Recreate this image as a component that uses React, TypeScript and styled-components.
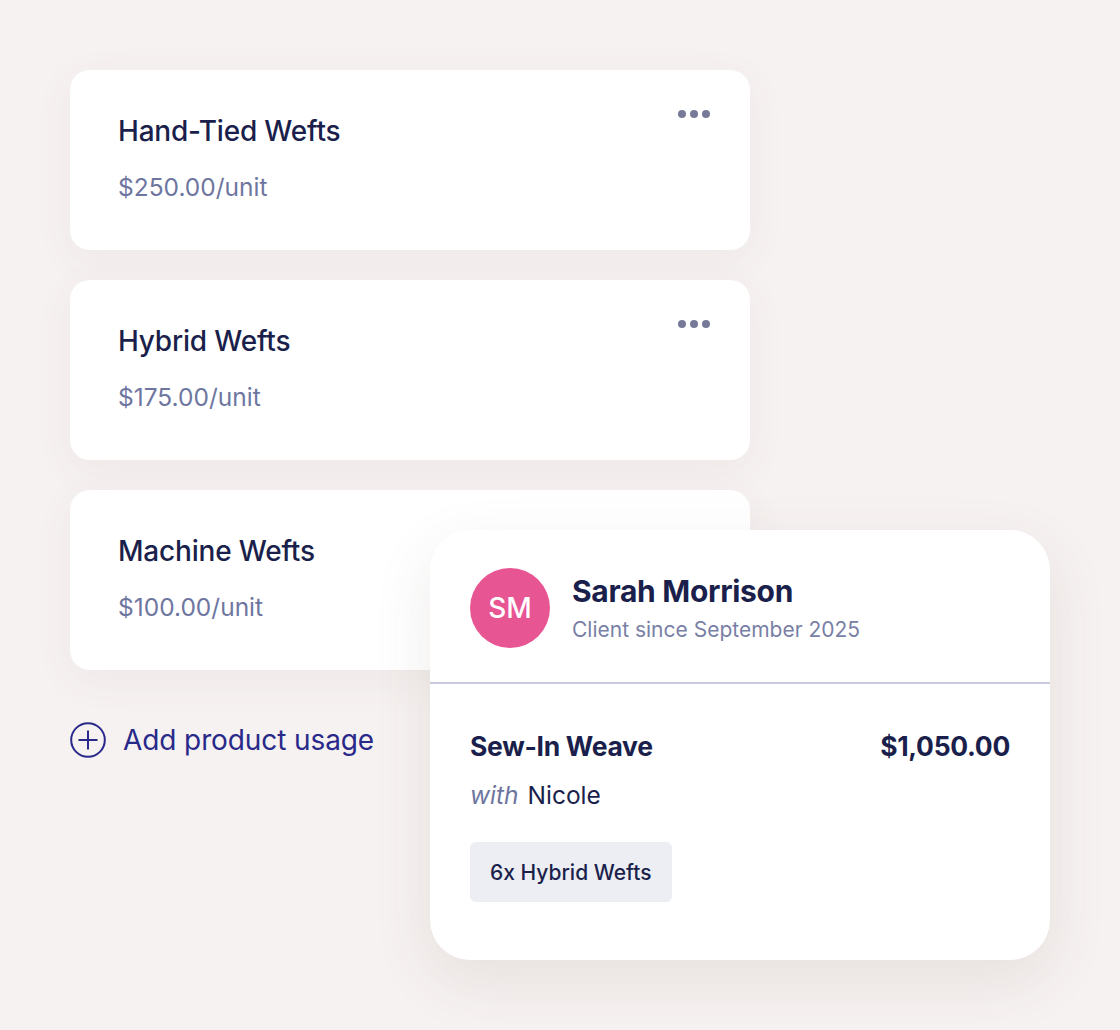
import React from 'react'
import styled, { createGlobalStyle } from 'styled-components'

const GlobalStyle = createGlobalStyle`
  html, body {
    margin: 0;
    padding: 0;
    background: #f6f2f1;
  }
  body {
    font-family: Inter, 'Liberation Sans', sans-serif;
    color: #1b1f4b;
    -webkit-font-smoothing: antialiased;
  }
`

const Stage = styled.div`
  position: relative;
  width: 1120px;
  height: 1030px;
  padding: 70px 0 0 70px;
  box-sizing: border-box;
`

const ProductList = styled.div`
  display: flex;
  flex-direction: column;
  gap: 30px;
  width: 680px;
`

const ProductCard = styled.div`
  position: relative;
  height: 180px;
  box-sizing: border-box;
  padding: 44px 48px 0;
  background: #fff;
  border-radius: 20px;
  box-shadow: 0 10px 40px rgba(120, 90, 80, 0.06);
`

const ProductName = styled.div`
  font-size: 28px;
  font-weight: 500;
  letter-spacing: -0.2px;
  color: #1b1f4b;
  line-height: 34px;
`

const ProductPrice = styled.div`
  margin-top: 24px;
  font-size: 24.5px;
  color: #6e76a0;
  line-height: 30px;
`

const MoreDots = styled.div`
  position: absolute;
  top: 40px;
  right: 40px;
  display: flex;
  gap: 4px;

  span {
    width: 8px;
    height: 8px;
    border-radius: 50%;
    background: #767a98;
  }
`

const AddRow = styled.div`
  display: flex;
  align-items: center;
  gap: 17px;
  margin-top: 52px;
  height: 36px;
  color: #29298a;
  font-size: 28px;
  letter-spacing: -0.1px;
`

const ClientCard = styled.div`
  position: absolute;
  left: 430px;
  top: 530px;
  width: 620px;
  height: 430px;
  background: #fff;
  border-radius: 40px;
  box-shadow: 0 20px 60px rgba(100, 70, 60, 0.1);
  overflow: hidden;
`

const ClientHeader = styled.div`
  display: flex;
  align-items: flex-start;
  gap: 22px;
  height: 154px;
  box-sizing: border-box;
  padding: 38px 40px 0;
  border-bottom: 2px solid #c9cade;
`

const Avatar = styled.div`
  flex: none;
  width: 80px;
  height: 80px;
  border-radius: 50%;
  background: #e85593;
  color: #fff;
  display: flex;
  align-items: center;
  justify-content: center;
  font-size: 28px;
  font-weight: 500;
`

const ClientInfo = styled.div`
  display: flex;
  flex-direction: column;
  gap: 8px;
  padding-top: 5px;
`

const ClientName = styled.div`
  font-size: 30px;
  line-height: 36px;
  font-weight: 700;
  letter-spacing: -0.3px;
  color: #1b1f4b;
`

const ClientSince = styled.div`
  font-size: 21px;
  line-height: 26px;
  color: #7980a6;
`

const ServiceBody = styled.div`
  padding: 46px 40px 0;
`

const ServiceRow = styled.div`
  display: flex;
  justify-content: space-between;
  align-items: baseline;
  font-size: 26.5px;
  line-height: 32px;
  font-weight: 700;
  letter-spacing: -0.3px;
  color: #1b1f4b;
`

const WithLine = styled.div`
  margin-top: 18px;
  font-size: 24.5px;
  line-height: 30px;
  color: #1b1f4b;

  em {
    color: #6e76a0;
    font-style: italic;
    margin-right: 9px;
  }
`

const UsageChip = styled.div`
  display: inline-flex;
  align-items: center;
  margin-top: 32px;
  height: 60px;
  padding: 0 20px;
  background: #eceef3;
  border-radius: 6px;
  font-size: 21px;
  font-weight: 500;
  color: #1b1f4b;
`

const products = [
  { name: 'Hand-Tied Wefts', price: '$250.00', menu: true },
  { name: 'Hybrid Wefts', price: '$175.00', menu: true },
  { name: 'Machine Wefts', price: '$100.00', menu: false },
]

const PlusCircle = () => (
  <svg width="36" height="36" viewBox="0 0 36 36" fill="none">
    <circle cx="18" cy="18" r="16.8" stroke="#29298a" strokeWidth="2" />
    <path d="M18 8.5v19M8.5 18h19" stroke="#29298a" strokeWidth="2" />
  </svg>
)

export default function App() {
  return (
    <Stage>
      <GlobalStyle />
      <ProductList>
        {products.map((p) => (
          <ProductCard key={p.name}>
            <ProductName>{p.name}</ProductName>
            <ProductPrice>{p.price}/unit</ProductPrice>
            {p.menu && (
              <MoreDots>
                <span />
                <span />
                <span />
              </MoreDots>
            )}
          </ProductCard>
        ))}
      </ProductList>
      <AddRow>
        <PlusCircle />
        Add product usage
      </AddRow>
      <ClientCard>
        <ClientHeader>
          <Avatar>SM</Avatar>
          <ClientInfo>
            <ClientName>Sarah Morrison</ClientName>
            <ClientSince>Client since September 2025</ClientSince>
          </ClientInfo>
        </ClientHeader>
        <ServiceBody>
          <ServiceRow>
            <span>Sew-In Weave</span>
            <span>$1,050.00</span>
          </ServiceRow>
          <WithLine>
            <em>with</em>Nicole
          </WithLine>
          <UsageChip>6x Hybrid Wefts</UsageChip>
        </ServiceBody>
      </ClientCard>
    </Stage>
  )
}
